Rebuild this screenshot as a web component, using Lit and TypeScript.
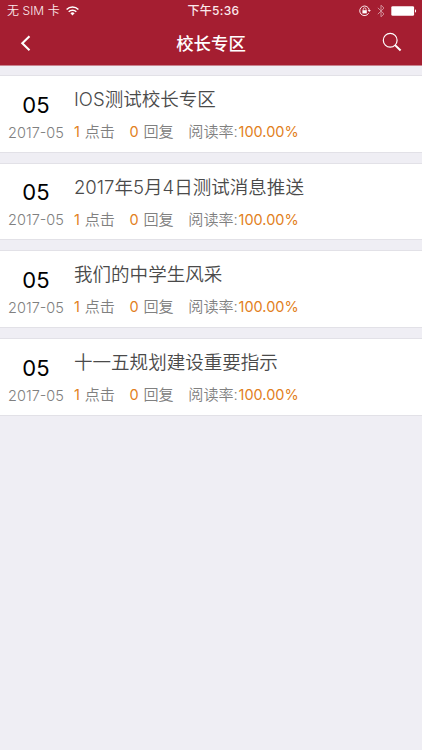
import { LitElement, html, css } from "lit";
import { customElement, property } from "lit/decorators.js";

interface Notice {
  day: string;
  month: string;
  title: string;
  clicks: number;
  replies: number;
  rate: string;
}

const NOTICES: Notice[] = [
  { day: "05", month: "2017-05", title: "IOS测试校长专区", clicks: 1, replies: 0, rate: "100.00%" },
  { day: "05", month: "2017-05", title: "2017年5月4日测试消息推送", clicks: 1, replies: 0, rate: "100.00%" },
  { day: "05", month: "2017-05", title: "我们的中学生风采", clicks: 1, replies: 0, rate: "100.00%" },
  { day: "05", month: "2017-05", title: "十一五规划建设重要指示", clicks: 1, replies: 0, rate: "100.00%" },
];

@customElement("status-bar")
class StatusBar extends LitElement {
  static styles = css`
    :host { display: grid; grid-template-columns: 1fr auto 1fr; align-items: center; height: 22px; padding: 0 5px 0 7px; color: #fbe9ec; font-size: 12px; line-height: 22px; }
    .carrier, .indicators { display: flex; align-items: center; }
    .carrier { gap: 6px; font-weight: 350; letter-spacing: 0.06px; }
    .time { font-weight: 450; letter-spacing: 0.3px; padding-left: 3px; }
    .indicators { justify-content: flex-end; }
    .lock { margin-right: 6px; }
    .bluetooth { margin-right: 6px; opacity: 0.5; }
    svg { display: block; }
  `;
  render() {
    return html`
      <div class="carrier">
        <span>无 SIM 卡</span>
        <svg width="13" height="10" viewBox="0 0 13 10" fill="none" stroke="#fff" stroke-width="1.5">
          <path d="M.6 3.5a8.4 8.4 0 0 1 11.8 0M2.7 5.7a5.4 5.4 0 0 1 7.6 0" />
          <path d="M6.5 9.4 4.4 7.3a3 3 0 0 1 4.2 0z" fill="#fff" stroke="none" />
        </svg>
      </div>
      <span class="time">下午5:36</span>
      <div class="indicators">
        <svg class="lock" width="12" height="12" viewBox="0 0 12 12" fill="none" stroke="#fbe9ec">
          <path d="M9.7 8.2A4.8 4.8 0 1 1 10.3 5.2" />
          <path d="M8.6 5h3.3l-1.6 2.1z" fill="#fbe9ec" stroke="none" />
          <path d="M4.2 5.4V4.2a1.4 1.4 0 0 1 2.8 0v1.2" stroke-width=".8" />
          <path d="M3.4 5.2h4.4v3.2H3.4z" fill="#fff" stroke="none" />
        </svg>
        <svg class="bluetooth" width="8" height="14" viewBox="0 0 8 14" fill="none" stroke="#fff">
          <path d="M.8 3.8 7 9.9 4 12.8V1.2L7 4.1.8 10.2" />
        </svg>
        <svg width="26" height="10" viewBox="0 0 26 10" fill="#fff">
          <rect x=".3" y=".2" width="22.8" height="9.6" rx="1.4" />
          <path d="M24 3.3c1.5.4 1.5 3 0 3.4z" />
        </svg>
      </div>
    `;
  }
}

@customElement("nav-bar")
class NavBar extends LitElement {
  @property() heading = "";
  static styles = css`
    :host { display: grid; grid-template-columns: 1fr auto 1fr; align-items: center; height: 43px; padding: 0 20px; box-sizing: border-box; color: #fff; }
    .heading { font-size: 17.4px; font-weight: 500; line-height: 24px; }
    .search { justify-self: end; margin-top: -3px; }
    svg { display: block; }
  `;
  render() {
    return html`
      <svg width="12" height="18" viewBox="0 0 12 18" fill="none" stroke="#fff" stroke-width="2.1">
        <path d="M9.5 1.3 2.3 8.3l7.2 7" />
      </svg>
      <span class="heading">${this.heading}</span>
      <svg class="search" width="20" height="20" viewBox="0 0 20 20" fill="none" stroke="#fff">
        <circle cx="8.2" cy="8.2" r="6.9" stroke-width="1.2" />
        <path d="m13.1 13.1 5.5 5.4" stroke-width="2" />
      </svg>
    `;
  }
}

@customElement("notice-card")
class NoticeCard extends LitElement {
  @property({ attribute: false }) notice!: Notice;
  static styles = css`
    :host { display: grid; grid-template-columns: 72px 1fr; column-gap: 2px; height: 77.6px; box-sizing: border-box; background: #fff; border-top: 1px solid #e2e1e7; border-bottom: 1px solid #e2e1e7; white-space: nowrap; }
    .date { display: flex; flex-direction: column; align-items: center; padding-top: 13.5px; }
    .day { font-size: 22px; font-weight: 400; line-height: 30px; color: #000; }
    .month { font-size: 14.5px; line-height: 20px; margin-top: 3px; color: #808080; }
    .title { font-size: 18.55px; line-height: 26px; padding-top: 10px; color: #4a4a4a; }
    .meta { display: flex; gap: 14.6px; margin-top: 10px; font-size: 15.1px; line-height: 20px; color: #808080; }
    .accent { color: #e27f22; font-size: 14.5px; font-weight: 400; }
    .count { margin-right: 0.6px; }
    .rate { margin-left: 0.7px; }
  `;
  render() {
    const n = this.notice;
    return html`
      <div class="date">
        <span class="day">${n.day}</span>
        <span class="month">${n.month}</span>
      </div>
      <div>
        <div class="title">${n.title}</div>
        <div class="meta">
          <span><span class="accent count">${n.clicks}</span> 点击</span>
          <span><span class="accent count">${n.replies}</span> 回复</span>
          <span>阅读率:<span class="accent rate">${n.rate}</span></span>
        </div>
      </div>
    `;
  }
}

@customElement("app-root")
class AppRoot extends LitElement {
  static styles = css`
    :host { display: block; min-height: 750px; background: #efeef4; font-family: Inter, "Noto Sans CJK SC", sans-serif; font-weight: 350; }
    .header { background: #a51e31; border-bottom: 1px solid #c8838e; }
    .list { display: flex; flex-direction: column; gap: 10.1px; padding-top: 9px; }
  `;
  render() {
    return html`
      <div class="header">
        <status-bar></status-bar>
        <nav-bar .heading=${"校长专区"}></nav-bar>
      </div>
      <div class="list">${NOTICES.map((n) => html`<notice-card .notice=${n}></notice-card>`)}</div>
    `;
  }
}
